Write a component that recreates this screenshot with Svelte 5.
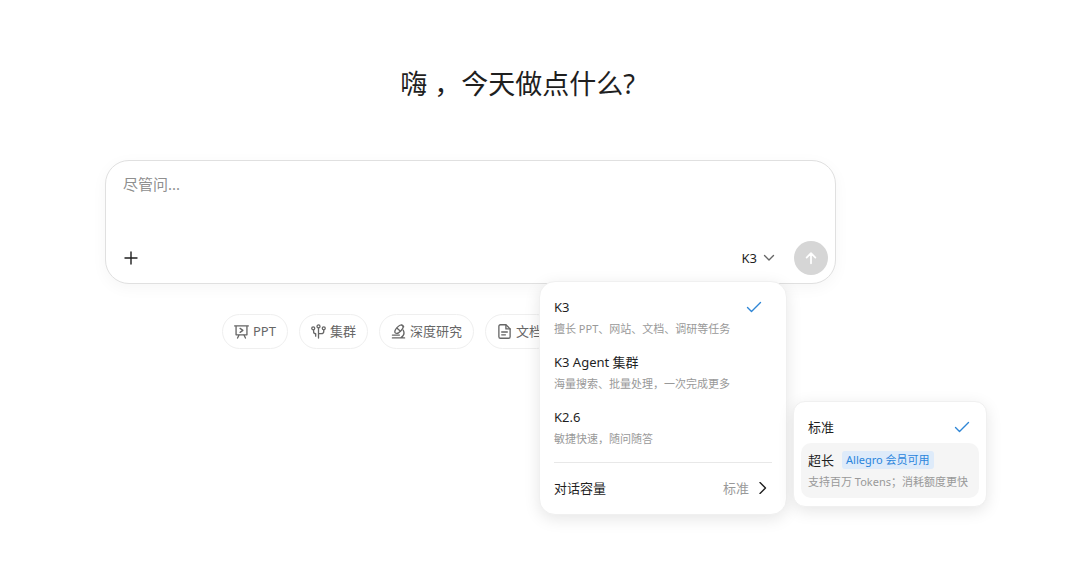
<script lang="ts">
	type Model = {
		name: string;
		desc: string;
	};

	const models: Model[] = [
		{ name: 'K3', desc: '擅长 PPT、网站、文档、调研等任务' },
		{ name: 'K3 Agent 集群', desc: '海量搜索、批量处理，一次完成更多' },
		{ name: 'K2.6', desc: '敏捷快速，随问随答' }
	];

	const shortcuts = [
		{ icon: 'slides', label: 'PPT' },
		{ icon: 'swarm', label: '集群' },
		{ icon: 'research', label: '深度研究' },
		{ icon: 'doc', label: '文档' }
	];

	let message = $state('');
	let current = $state('K3');
	let capacity = $state('标准');
	let menuOpen = $state(true);
	let capacityOpen = $state(true);

	const pickModel = (name: string) => {
		current = name;
		menuOpen = false;
	};
</script>

{#snippet check()}
	<svg class="check" viewBox="0 0 16 16" aria-hidden="true">
		<path d="M1.5 8.5L5.5 12.5L14.5 3.5" />
	</svg>
{/snippet}

<main>
	<h1>嗨 ，今天做点什么?</h1>

	<form class="composer" onsubmit={(e) => e.preventDefault()}>
		<textarea aria-label="尽管问" placeholder="尽管问..." bind:value={message}></textarea>
		<div class="toolbar">
			<button class="add" type="button" aria-label="添加">
				<svg viewBox="0 0 16 16"><path d="M8 2V14M2 8H14" /></svg>
			</button>

			<div class="picker">
				<button
					class="model-btn"
					type="button"
					aria-expanded={menuOpen}
					onclick={() => (menuOpen = !menuOpen)}
				>
					{current}
					<svg viewBox="0 0 12 12"><path d="M1.5 3.5L6 8L10.5 3.5" /></svg>
				</button>

				{#if menuOpen}
					<div class="panel menu">
						{#each models as model}
							<button class="item" type="button" onclick={() => pickModel(model.name)}>
								<span class="title">{model.name}</span>
								<span class="desc">{model.desc}</span>
								{#if model.name === current}
									{@render check()}
								{/if}
							</button>
						{/each}
						<hr />
						<button
							class="capacity"
							type="button"
							aria-expanded={capacityOpen}
							onclick={() => (capacityOpen = !capacityOpen)}
						>
							<span>对话容量</span>
							<span class="value">{capacity}</span>
							<svg viewBox="0 0 12 12"><path d="M3 0.5L8.5 6L3 11.5" /></svg>
						</button>

						{#if capacityOpen}
							<div class="panel submenu">
								<button class="item" type="button" onclick={() => (capacity = '标准')}>
									<span class="title">标准</span>
									{@render check()}
								</button>
								<button class="item active" type="button">
									<span class="title">超长 <span class="badge">Allegro 会员可用</span></span>
									<span class="desc">支持百万 Tokens；消耗额度更快</span>
								</button>
							</div>
						{/if}
					</div>
				{/if}
			</div>

			<button class="send" type="submit" aria-label="发送">
				<svg viewBox="0 0 16 16"><path d="M8 14V2.5M3 7.5L8 2.5L13 7.5" /></svg>
			</button>
		</div>
	</form>

	<div class="shortcuts">
		{#each shortcuts as item}
			<button class="chip" type="button">
				<svg viewBox="0 0 16 16" aria-hidden="true">
					{#if item.icon === 'slides'}
						<path d="M0.7 2H15.3M2.2 2V11.5H13.8V2M5.5 11.5L3.8 15M10.5 11.5L12.2 15M6.5 4.7L9.5 6.8L6.5 8.9" />
					{:else if item.icon === 'swarm'}
						<circle cx="2.4" cy="4.6" r="1.6" />
						<circle cx="8" cy="2.6" r="1.6" />
						<circle cx="13.6" cy="4.6" r="1.6" />
						<path d="M8 4.2V15M2.8 6.2V8.5Q2.8 10.3 5 10.3V13M13.6 6.2V8Q13.6 10.3 11 10.3H8" />
					{:else if item.icon === 'research'}
						<ellipse cx="8.5" cy="5.5" rx="5.6" ry="2.7" transform="rotate(-45 8.5 5.5)" />
						<path d="M6.5 4.5L9.8 7.5M11.5 1.2L13.5 3" />
						<path d="M13 6.5C14.6 9.5 13.5 12.8 10.5 14.8M1.5 14.8H14.5M1.5 11.8H9" />
					{:else}
						<path d="M3.7 0.8H9.5L14 5.2V13.5Q14 15.2 12.3 15.2H3.7Q2 15.2 2 13.5V2.5Q2 0.8 3.7 0.8Z" />
						<path d="M9.5 1V5.2H14M5 8.5H11M5 11.5H9" />
					{/if}
				</svg>
				{item.label}
			</button>
		{/each}
	</div>
</main>

<style>
	:global(body) {
		background: #fff;
		color: #1f1f1f;
		font-family: 'Noto Sans', 'Noto Sans CJK SC', sans-serif;
	}

	main {
		box-sizing: border-box;
		max-width: 731px;
		min-height: 100vh;
		margin-left: 105px;
		margin-right: 48px;
		padding-top: 64px;
	}

	h1 {
		margin: 0 0 56px;
		padding-left: 94px;
		font-size: 27px;
		font-weight: 400;
		line-height: 40px;
		text-align: center;
	}

	button {
		padding: 0;
		border: 0;
		background: none;
		color: inherit;
		font: inherit;
		cursor: pointer;
	}

	svg {
		flex: none;
		fill: none;
		stroke: currentColor;
		stroke-width: 1.4;
		stroke-linecap: round;
		stroke-linejoin: round;
	}

	.composer {
		display: flex;
		flex-direction: column;
		box-sizing: border-box;
		padding: 11px 7px 8px 17px;
		border: 1px solid #e0e0e0;
		border-radius: 24px;
		background: #fff;
		box-shadow: 0 4px 16px rgba(0, 0, 0, 0.04);
	}

	textarea {
		height: 68px;
		padding: 0;
		border: 0;
		outline: none;
		resize: none;
		background: none;
		color: inherit;
		font-family: inherit;
		font-size: 15px;
		line-height: 24px;
	}

	textarea::placeholder {
		color: #8f8f8f;
	}

	.toolbar {
		display: flex;
		align-items: center;
		height: 35px;
	}

	.add {
		display: flex;
	}

	.add svg {
		width: 16px;
		height: 16px;
	}

	.picker {
		position: relative;
		margin-left: auto;
		margin-right: 10px;
	}

	.model-btn {
		display: flex;
		align-items: center;
		gap: 6px;
		padding: 0 9px;
		font-size: 13px;
		line-height: 24px;
	}

	.model-btn svg {
		width: 12px;
		height: 12px;
		stroke: #666;
	}

	.send {
		display: flex;
		align-items: center;
		justify-content: center;
		width: 34px;
		height: 34px;
		border-radius: 50%;
		background: #d6d6d6;
		color: #fff;
	}

	.send svg {
		width: 14px;
		height: 14px;
		stroke-width: 2;
	}

	.panel {
		position: absolute;
		box-sizing: border-box;
		padding: 8px 7px;
		border: 1px solid #f0f0f0;
		background: #fff;
		box-shadow: 0 4px 16px rgba(0, 0, 0, 0.1);
	}

	.menu {
		top: 35px;
		right: -3px;
		z-index: 1;
		width: 248px;
		border-radius: 16px;
	}

	.submenu {
		left: 100%;
		bottom: 7px;
		width: 194px;
		margin-left: 7px;
		border-radius: 12px;
	}

	.item {
		position: relative;
		display: block;
		width: 100%;
		padding: 6px 7px 5px;
		border-radius: 10px;
		text-align: left;
		white-space: nowrap;
	}

	.active {
		background: #f5f5f5;
	}

	.title {
		display: flex;
		align-items: center;
		gap: 8px;
		font-size: 13px;
		line-height: 22px;
	}

	.desc {
		display: block;
		color: #999;
		font-size: 11px;
		line-height: 22px;
	}

	.check {
		position: absolute;
		top: 9px;
		right: 17px;
		width: 16px;
		height: 16px;
		stroke: #2f86d6;
	}

	.submenu .check {
		right: 9px;
	}

	.badge {
		padding: 0 4px;
		border-radius: 3px;
		background: #deebfa;
		color: #2b85dc;
		font-size: 11px;
		line-height: 18px;
	}

	hr {
		margin: 7px;
		border: 0;
		border-top: 1px solid #e8e8e8;
	}

	.capacity {
		display: flex;
		align-items: center;
		width: 100%;
		padding: 7px;
		font-size: 13px;
		line-height: 22px;
	}

	.capacity svg {
		width: 12px;
		height: 12px;
		margin-left: 8px;
		margin-right: 3px;
	}

	.value {
		margin-left: auto;
		color: #999;
	}

	.shortcuts {
		display: flex;
		gap: 11px;
		margin-top: 30px;
		padding-left: 16%;
	}

	.chip {
		display: flex;
		align-items: center;
		gap: 4px;
		padding: 0 11px;
		border: 1px solid #efefef;
		border-radius: 18px;
		color: #666;
		font-size: 13px;
		line-height: 33px;
		white-space: nowrap;
	}

	.chip svg {
		width: 15px;
		height: 15px;
	}
</style>
